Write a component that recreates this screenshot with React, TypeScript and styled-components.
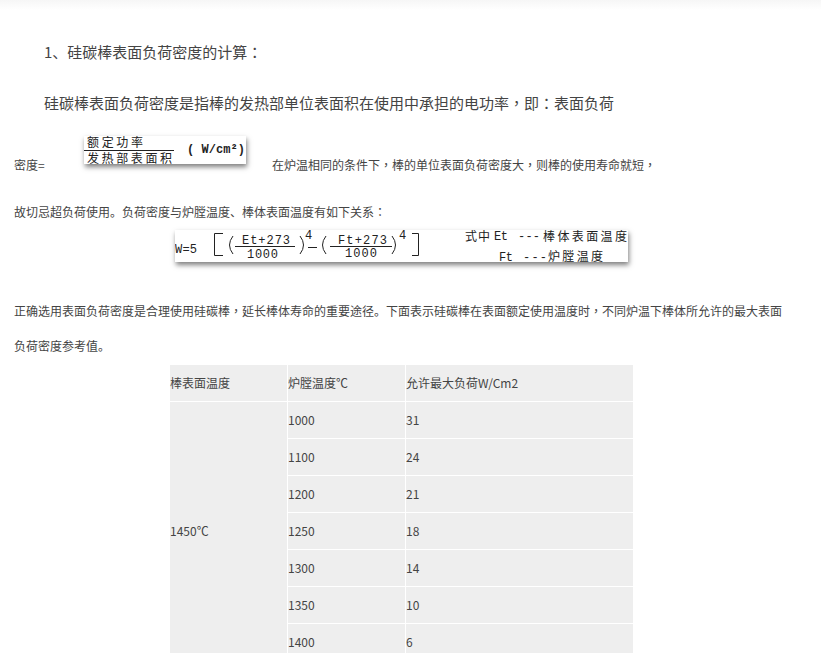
import styled, { createGlobalStyle } from "styled-components";

const GlobalStyle = createGlobalStyle`
  html, body {
    margin: 0;
    padding: 0;
    height: 100%;
    overflow: hidden;
    background: #fff;
  }
`;

const Page = styled.div`
  width: 821px;
  height: 653px;
  overflow: hidden;
  box-sizing: border-box;
  padding-top: 35px;
  background: linear-gradient(#f6f6f6 0, #fff 10px);
  font-family: "Noto Sans CJK SC", "Noto Sans", sans-serif;
  color: #444;
`;

// centred comma and colon, as in the original page
const Mark = styled.span`
  font-family: "Noto Sans CJK TC", sans-serif;
`;

const Lead = styled.p`
  margin: 0 0 16px;
  padding: 0 0 2px 44px;
  font-size: 15px;
  line-height: 33px;
  white-space: nowrap;
`;

const Para = styled.p`
  margin: 0;
  padding: 0 0 2px 14px;
  font-size: 12px;
  line-height: 33px;
  white-space: nowrap;
`;

const FormulaRow = styled.div`
  display: flex;
  align-items: flex-end;
  height: 46px;
  margin: -1px 0 13px;
  padding-left: 14px;
  font-size: 12px;
  line-height: 35px;
  white-space: nowrap;
`;

const Label = styled.span`
  width: 70px;
`;

const FormulaOne = styled.svg`
  align-self: flex-start;
  width: 162px;
  height: 28px;
  margin-right: 26px;
  background: #fff;
  box-shadow: 1px 3px 5px rgba(0, 0, 0, 0.5);
  overflow: hidden;
`;

const FormulaBlock = styled.div`
  display: flex;
  height: 64px;
  padding-left: 175px;
`;

const FormulaTwo = styled.svg`
  width: 453px;
  height: 32px;
  background: #fff;
  box-shadow: 1px 3px 5px rgba(0, 0, 0, 0.5);
  overflow: hidden;
`;

const Cn = styled.text`
  font-family: "Noto Sans CJK SC", sans-serif;
  font-size: 12px;
  fill: #222;
`;

const Mono = styled.text`
  font-family: "Liberation Mono", monospace;
  font-size: 12px;
  fill: #222;
`;

const Bracket = styled.path`
  fill: none;
  stroke: #222;
  stroke-width: 1;
`;

const Table = styled.table`
  width: 463px;
  margin: 1px 0 0 170px;
  border-collapse: separate;
  border-spacing: 0;
  table-layout: fixed;
  font-size: 12px;
`;

const Cell = styled.td`
  height: 34px;
  padding: 0 0 2px;
  background: #eee;
  border-right: 1px solid #fff;
  border-bottom: 1px solid #fff;
  vertical-align: middle;
  white-space: nowrap;
  &:last-child {
    border-right: 0;
  }
`;

const rows = [
  ["1000", "31"],
  ["1100", "24"],
  ["1200", "21"],
  ["1250", "18"],
  ["1300", "14"],
  ["1350", "10"],
  ["1400", "6"],
];

export default function App() {
  return (
    <Page>
      <GlobalStyle />
      <Lead>1、硅碳棒表面负荷密度的计算<Mark>：</Mark></Lead>
      <Lead>硅碳棒表面负荷密度是指棒的发热部单位表面积在使用中承担的电功率<Mark>，</Mark>即<Mark>：</Mark>表面负荷</Lead>
      <FormulaRow>
        <Label>密度=</Label>
        <FormulaOne viewBox="0 0 162 28">
          <Cn x="3" y="10.5" textLength="56">额定功率</Cn>
          <rect x="0" y="14" width="90" height="1" fill="#222" />
          <Cn x="3" y="27" textLength="85">发热部表面积</Cn>
          <Mono x="103" y="17" textLength="58" fontWeight="bold" fontSize="11">( W/cm²)</Mono>
        </FormulaOne>
        <span>在炉温相同的条件下<Mark>，</Mark>棒的单位表面负荷密度大<Mark>，</Mark>则棒的使用寿命就短<Mark>，</Mark></span>
      </FormulaRow>
      <Para>故切忌超负荷使用。负荷密度与炉膛温度、棒体表面温度有如下关系<Mark>：</Mark></Para>
      <FormulaBlock>
        <FormulaTwo viewBox="0 0 453 32">
          <Mono x="0" y="23" textLength="22">W=5</Mono>
          <Bracket d="M48 3.5H39.5V25.5H48" />
          <Bracket d="M58 6Q51 15 58 24" />
          <Mono x="67" y="14" textLength="48">Et+273</Mono>
          <rect x="60" y="16" width="60" height="1" fill="#222" />
          <Mono x="72" y="28" textLength="31">1000</Mono>
          <Bracket d="M125 6Q132 15 125 24" />
          <Mono x="130" y="9" fontSize="11">4</Mono>
          <rect x="133" y="17" width="9" height="1" fill="#222" />
          <Bracket d="M151 6Q144 15 151 24" />
          <Mono x="163" y="14" textLength="49">Ft+273</Mono>
          <rect x="155" y="16" width="62" height="1" fill="#222" />
          <Mono x="170" y="27" textLength="32">1000</Mono>
          <Bracket d="M217 6Q224 15 217 24" />
          <Mono x="224" y="9" fontSize="11">4</Mono>
          <Bracket d="M237 3.5H243.5V25.5H237" />
          <Cn x="290" y="10.5" textLength="25">式中</Cn>
          <Mono x="319" y="10" textLength="14">Et</Mono>
          <Mono x="343" y="10" textLength="22">---</Mono>
          <Cn x="368" y="10.5" textLength="84">棒体表面温度</Cn>
          <Mono x="324" y="31" textLength="14">Ft</Mono>
          <Mono x="348" y="31" textLength="24">---</Mono>
          <Cn x="373" y="31" textLength="55">炉膛温度</Cn>
        </FormulaTwo>
      </FormulaBlock>
      <Para>正确选用表面负荷密度是合理使用硅碳棒<Mark>，</Mark>延长棒体寿命的重要途径。下面表示硅碳棒在表面额定使用温度时<Mark>，</Mark>不同炉温下棒体所允许的最大表面</Para>
      <Para>负荷密度参考值。</Para>
      <Table>
        <colgroup>
          <col width="118" />
          <col width="118" />
          <col width="227" />
        </colgroup>
        <tbody>
          <tr>
            <Cell>棒表面温度</Cell>
            <Cell>炉膛温度℃</Cell>
            <Cell>允许最大负荷W/Cm2</Cell>
          </tr>
          {rows.map((row, i) => (
            <tr key={row[0]}>
              {i === 0 && <Cell rowSpan={rows.length}>1450℃</Cell>}
              <Cell>{row[0]}</Cell>
              <Cell>{row[1]}</Cell>
            </tr>
          ))}
        </tbody>
      </Table>
    </Page>
  );
}
